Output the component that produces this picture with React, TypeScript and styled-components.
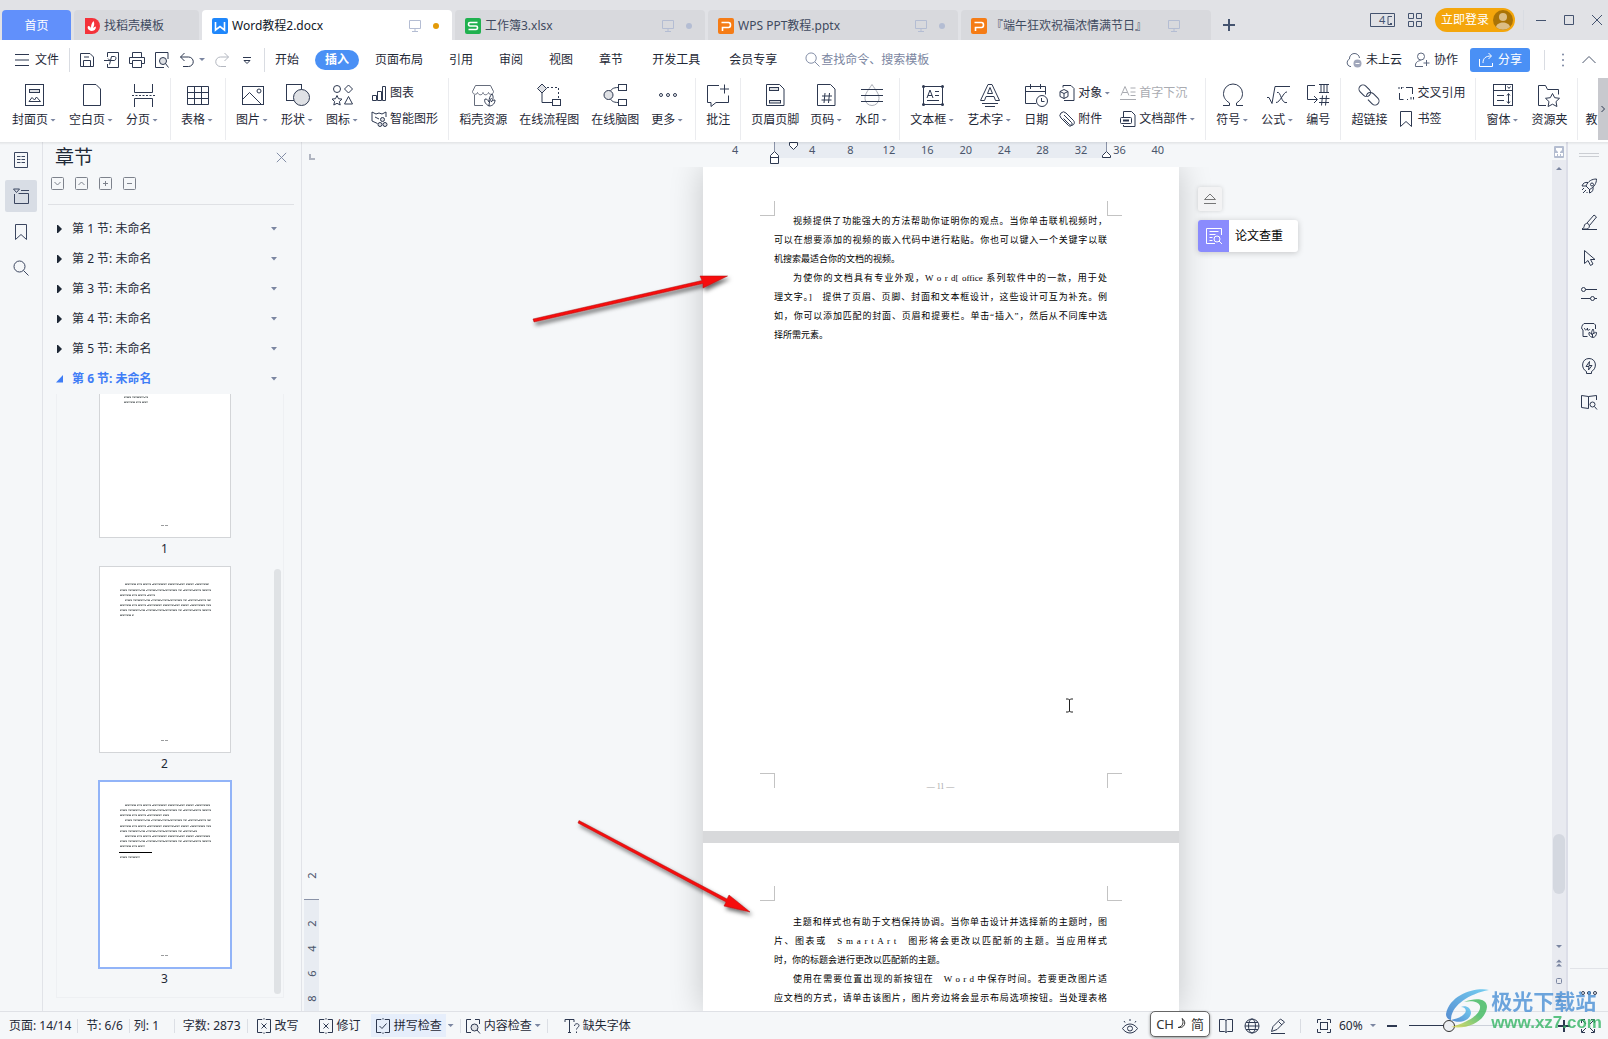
import React from "react";
import styled, { createGlobalStyle, css } from "styled-components";

const ink = "#2d3850";
const text = "#1f2937";
const mute = "#7b86a1";
const accent = "#4a90f5";
const surface = "#f5f7f9";
const soft = "#dfe1e5";

const GlobalStyle = createGlobalStyle`
  *, *::before, *::after { box-sizing: border-box; }
  html, body { margin: 0; height: 100%; }
  body {
    font: 12px/16px "Noto Sans", "Noto Sans CJK SC", sans-serif;
    color: ${text};
    background: ${surface};
    overflow: hidden;
  }
  button, input, select {
    font: inherit;
    color: inherit;
    margin: 0;
    padding: 0;
    border: 0;
    background: none;
    white-space: nowrap;
  }
`;

const Shell = styled.div`
  position: relative;
  height: 100vh;
  display: flex;
  flex-direction: column;
`;

/* ---------- icons ---------- */

const Svg = styled.svg`
  flex: none;
  display: block;
  overflow: visible;
`;

type IconProps = { name: string; size?: number; color?: string };

const leaf = (
  <>
    <path d="M18 23c-4-2-5-5-4-7 2 0 3 1 4 3 0-4 1-6 3-8 2 3 1 6-1 8 1-1 2-2 4-2 0 3-2 6-6 6z" fill="#fff" />
    <path d="M18 23c0-3 1-6 2.500-8" />
  </>
);

const glyphs: Record<string, React.ReactNode> = {
  cover: <><rect x="2.500" y="1.500" width="18" height="21" /><rect x="6.500" y="6.500" width="10" height="3" fill={soft} /><path d="M6 18.500l3-4 2.500 2.500 2-3 4 4.500z" /></>,
  blank: <path d="M3.500 1.500h12.500l4.500 4.500v16.500h-17z" />,
  break: <><path d="M3.500 1v8.500h18V1M3.500 24v-8.500h18V24" /><path d="M1 12.500h23" strokeDasharray="2 1.500" /></>,
  table: <path d="M1.500 3.500h21v18h-21zM1.500 9.500h21M1.500 15.500h21M8.500 3.500v18M15.500 3.500v18" />,
  picture: <><rect x="1.500" y="3.500" width="21" height="18" /><circle cx="18" cy="8" r="2" /><path d="M2 16l6.500-6.500L20.500 21.500" /></>,
  shapes: <><rect x=".500" y="1.500" width="15" height="16" /><circle cx="15.500" cy="14.500" r="8" fill={soft} /></>,
  icons: <><circle cx="6" cy="6" r="3.500" /><path d="M17.500 2l4 4-4 4-4-4zM17.500 13.500l4 7.500h-8zM6 12.500l1.500 3.200 3.500.400-2.600 2.400.800 3.500L6 20.300 2.800 22l.800-3.500L1 16.100l3.500-.400z" /></>,
  store: <><path d="M1.500 8.500L4.500 2.500h15l3 6c0 3-4 4-5 1-1 3-5 3-5.500 0-.500 3-4.500 3-5.500 0-1 3-5 2-5-1zM3.500 12v10.500H12" stroke="#666d7c" />{leaf}</>,
  flow: <><path d="M5 1l4.500 4.500L5 10 .500 5.500z" fill={soft} /><path d="M5 10v9.500h11" /><path d="M10 4.500h11.500V16" strokeDasharray="2 2" /><rect x="15.500" y="16.500" width="8" height="6" /></>,
  mind: <><circle cx="5.500" cy="12" r="4.500" fill={soft} /><rect x="15.500" y="1.500" width="8" height="6" /><rect x="15.500" y="16.500" width="8" height="6" /><path d="M15.500 4.500c-6 0-7 2-8 3.500M15.500 19.500c-6 0-7-2-8-3.500" /></>,
  dots: <><circle cx="5" cy="12" r="1.500" /><circle cx="12" cy="12" r="1.500" /><circle cx="19" cy="12" r="1.500" /></>,
  comment: <path d="M13 2.500H1.500v17h3.500v4l5-4h12.500v-7M18.500 1.500v9M14 6h9" />,
  header: <><path d="M3.500 1.500h13l4.500 4.500v16.500h-17.500z" /><rect x="6.500" y="4.500" width="9" height="3" fill={soft} /><rect x="6.500" y="17.500" width="11" height="2.500" fill={soft} /></>,
  pageno: <><path d="M2.500 1.500h13l4.500 4.500v16.500h-17.500z" /><path d="M10 10l-1 10M14.500 10l-1 10M7 13h10M6.500 17h10" /></>,
  watermark: <><path d="M12 1.500c4 6 7 9 7 14a7 7 0 0 1-14 0c0-5 3-8 7-14z" stroke="#a9adb6" /><path d="M1 6.500h22M1 12.500h22M1 18.500h22" /></>,
  textbox: <><rect x="2.500" y="3.500" width="19" height="18" /><path d="M6 15l3-8 3 8M7 12.500h4M14 8.500h4M14 12.500h4M6 17.500h12" /><g fill={ink} stroke="none"><circle cx="2.500" cy="3.500" r="1.500" /><circle cx="21.500" cy="3.500" r="1.500" /><circle cx="2.500" cy="21.500" r="1.500" /><circle cx="21.500" cy="21.500" r="1.500" /></g></>,
  wordart: <><path d="M2.500 17.500l7.500-16h4l7.500 16h-4l-1.500-4h-8l-1.500 4zM9.500 10.500h5l-2.500-6z" /><path d="M4 20.500h16M7 23.500h10" /></>,
  date: <><path d="M12 20.500H1.500v-17h20v8M1.500 8.500h20M6.500 1v5M16.500 1v5" /><circle cx="18" cy="18" r="5.500" fill="#fff" /><path d="M17.500 15v3.500h3" /></>,
  omega: <path d="M2 22.500h6.500v-2.500C4 17 2.500 14 2.500 10.500a9 9 0 0 1 19 0c0 3.500-1.500 6.500-6 9.500v2.500H22" />,
  formula: <path d="M1 14.500h2l3 6 3-17h15M11 9.500c4-2 4 12 10 10M21 9c-3-1-7 11-11 10.500" />,
  numbering: <><path d="M9 2.500H1.500v14H11M8 13l3.500 3.500L8 20" /><path d="M13 1.500h10M13 9.500h10M15 1.500v8M18 1.500v8M21 1.500v8M16.500 12.500l-1 10M20.500 12.500l-1 10M13.500 15.500h10M13 19.500h10" /></>,
  link: <g transform="rotate(45 12 12)"><rect x="-.500" y="8" width="13" height="8" rx="4" /><path d="M11 14.500a4 4 0 0 1 .500-5.500c1-.800 2-1 3-1h6a4 4 0 0 1 0 8h-6" /></g>,
  form: <><rect x="2.500" y="1.500" width="19" height="21" /><path d="M2.500 7.500h19M14.500 1.500v6M16.500 3.500l1.500 2 1.500-2M6 12.500h7M6 17.500h7M17.500 11v9M16 12.500l1.500-2 1.500 2M16 18.500l1.500 2 1.500-2" /></>,
  folder: <><path d="M9 22.500H1.500v-20h7l2 4h11v5" /><path d="M15.500 10.500l2.200 4.200 4.800.600-3.500 3.300.900 4.900-4.400-2.300-4.400 2.300.900-4.900-3.500-3.300 4.800-.600z" fill="#fff" /></>,

  chart: <path d="M1.500 10.500h4v5h-4zM6.500 6.500h4v9h-4zM11.500 1.500h3v14h-3z" />,
  smart: <><path d="M6.500 12.500L1 10V1l4 2 3-1 3 1 4-2v5M4 6l4 2" /><circle cx="11.500" cy="8.500" r="2" fill={soft} /><circle cx="9" cy="13.500" r="2" fill={soft} /><circle cx="14" cy="13.500" r="2" fill={soft} /></>,
  object: <><path d="M4 2.500V.500h8l3 3v12H5" /><path d="M5 4.500l4 2v5l-4 2-4-2v-5zM1 6.500l4 2 4-2M5 8.500v5" fill="#fff" /></>,
  attach: <path d="M5 4l7.500 7.500a2 2 0 0 1-3 3L2 7a3.500 3.500 0 0 1 5-5l7.500 7.500c2.500 3-1 6.500-4 4L4.500 7.500" />,
  dropcap: <path d="M1 10.500l4-9 4 9M2.500 7.500h5M10.500 3h5M10.500 7h5M10.500 10.500h5M0 14.500h16" />,
  parts: <><path d="M3.500 6V.500h8l3.500 3.500v11.500H3.500V14" /><rect x=".500" y="6.500" width="11" height="6" rx="1" fill="#fff" /><path d="M3 9.500h6" strokeWidth="2" /></>,
  crossref: <path d="M8 2.500h6.500V9M5.500 14.500H1.500V8M1 2v2M3.500 2v2M13 12v2.500M15.500 12v2.500M5 2v1M9 14.500h1" />,
  bookmark: <path d="M2.500.500h11v15L8 10.500l-5.500 5z" />,

  save: <path d="M1.500 1.500h9.500l3.500 3.500v9.500h-13zM4.500 14.500v-6h7v6M5 5h5" />,
  pdf: <path d="M3.500 5V.500h11v15h-11V12M0 8.500h6l-2-2M5.500 12.500l2-8h3c2 0 2 4-.500 4H7" />,
  print: <path d="M3.500 5V.500h9V5M3.500 11.500h-3v-6h15v6h-3M3.500 8.500h9v7h-9z" />,
  preview: <><path d="M10 15.500H1.500V.500h12.500V7" /><circle cx="9" cy="9" r="3.500" fill={soft} /><path d="M11.500 11.500l3 4" /></>,
  undo: <path d="M5.500 1L1.500 5l4 4M1.500 5h8a4.500 4.500 0 0 1 0 9.500H4" />,
  redo: <path d="M10.500 1l4 4-4 4M14.500 5h-8a4.500 4.500 0 0 0 0 9.500H12" />,
  menuMore: <path d="M4 5.500h8M5 8.500l3 3 3-3z" />,
  menu: <path d="M1 2.500h14M1 8h14M1 13.500h14" />,
  search: <><circle cx="6.500" cy="6.500" r="5.500" /><path d="M10.500 10.500l5 5" /></>,
  cloud: <><path d="M5 14.500h-1a4 4 0 0 1-.500-7.500A5 5 0 0 1 13.500 6" /><circle cx="11.500" cy="11.500" r="4" fill="#a1a7bb" stroke="none" /><path d="M9.500 11.500h4" stroke="#fff" /></>,
  people: <><circle cx="7" cy="4.500" r="3.500" /><path d="M9 14.500H1.500c-.500-4 2-5.500 5-6M12.500 8v6M9.500 11h6" /></>,
  share: <path d="M1.500 7v7.500h13V11M5 11c0-5 3-7 8-7M10.500 1l3 3-3 3" />,
  kebab: <g fill={mute} stroke="none"><circle cx="8" cy="2.500" r="1" /><circle cx="8" cy="8" r="1" /><circle cx="8" cy="13.500" r="1" /></g>,
  up: <path d="M1.500 11L8 4.500l6.500 6.500" />,
  monitor: <path d="M2.500 2.500h11v8h-11zM8 10.500v3M5 13.500h6" />,
  plus: <path d="M8 2v12M2 8h12" strokeWidth="2" />,
  minus: <path d="M3 8h10" strokeWidth="2" />,
  grid: <path d="M1.500 1.500h5v5h-5zM9.500 1.500h5v5h-5zM1.500 9.500h5v5h-5zM9.500 9.500h5v5h-5z" />,
  min: <path d="M3 8.500h10" />,
  max: <path d="M3.500 3.500h9v9h-9z" />,
  close: <path d="M3 3l10 10M13 3L3 13" />,

  boxDown: <><rect x="1.500" y="1.500" width="12" height="12" rx="1" /><path d="M4.500 6l3 3 3-3" /></>,
  boxUp: <><rect x="1.500" y="1.500" width="12" height="12" rx="1" /><path d="M4.500 9l3-3 3 3" /></>,
  boxPlus: <><rect x="1.500" y="1.500" width="12" height="12" rx="1" /><path d="M7.500 5v5M5 7.500h5" /></>,
  boxMinus: <><rect x="1.500" y="1.500" width="12" height="12" rx="1" /><path d="M5 7.500h5" /></>,

  outline: <path d="M1.500.500h13v15h-13zM4 4.500h3.500M8.500 4.500H12M4 7.500h3.500M8.500 7.500H12M4 10.500h3.500M8.500 10.500H12" />,
  chapters: <path d="M.500 1h6l-3 3.500zM8 2.500h8M1.500 6v9.500h14v-10h-10" />,
  rocket: <path d="M5 8c2-5 6-7 10.500-7 0 4-2 8-7 10.500zM5 8L1 8c1-3 3-4 6-3.500M8.500 11l0 4c3-1 4-3 3.500-6M1 12l2-2M2 15l3-3M5.500 15l1-1M9.500 6.500a1.500 1.500 0 1 0 3 0 1.500 1.500 0 1 0-3 0" />,
  brush: <path d="M6 9l7-8 2.500 2-7 8.500M1 15.500h15M1 15c2-1 2-2 2.500-4 1-2 3-2 4.500-.500 1 2 0 4-2 4.500z" />,
  pointer: <path d="M3.500.500v13l3.500-3 2.500 5 2.500-1.500-2.500-4.500h4.500z" />,
  sliders: <><circle cx="2.500" cy="3.500" r="2" /><path d="M4.500 3.500H16M0 12.500h9.500M13.500 12.500H16" /><circle cx="11.500" cy="12.500" r="2" /></>,
  shop: <><path d="M6.500 14.500H2V8C0 7 .500 5 1.500 3L3 1.500h10l1.500 1.500v4M3.500 6c0 2.500 2.500 2.500 3 0v2M6.500 8c1 .500 2 0 2.500-1" /><path d="M11.500 15.500c-3-1-4-3-3.500-5 1.500 0 2 1 2.500 2 0-3 .500-4 1.500-5.500 1 2 1 3 .500 5 .500-1 1.500-2 3-1.500 0 3-1.500 5-4 5zM11.500 15.500v-4" /></>,
  bulb: <path d="M5.500 13.500c-6-3-5-13 2.500-13s8.500 10 2.500 13v2h-5zM8.500 3.500L5 8.500h3l-.500 3.500L11 7.500H8z" />,
  reader: <><path d="M7.500 14.500L.500 13.500V1.500L7.500 2.500 15.500 1.500V6M7.500 2.500v12" /><circle cx="11.500" cy="10.500" r="2.500" /><path d="M13.500 12.500l2.500 3" /></>,
  ooo: <><circle cx="2" cy="8" r="1.500" /><circle cx="8" cy="8" r="1.500" /><circle cx="14" cy="8" r="1.500" /></>,

  boxX: <path d="M6 1.500H1.500v13H6M10 1.500h4.500v13H10M5.500 5.500l5 5M10.500 5.500l-5 5M7 1.500l1-1 1 1M7 14.500l1 1 1-1" />,
  boxCheck: <path d="M6 1.500H1.500v13H6M10 1.500h4.500v13H10M4.500 8l2.500 2.500 4.500-5M7 1.500l1-1 1 1M7 14.500l1 1 1-1" />,
  boxFind: <><path d="M6 1.500H1.500v13H6M10 1.500h4.500V6" /><circle cx="9.500" cy="9.500" r="3.500" fill={soft} /><path d="M12 12l3 3.500" /></>,
  missing: <path d="M1 4V1.500h9V4M5.500 1.500v13M4 14.500h3M10.500 8c0-3 4.500-3 4.500-.500 0 2-2.500 2-2.500 4M12.500 13.500v1.500" />,
  eye: <><path d="M.500 10.500c4-6 11-6 15 0-4 6-11 6-15 0zM3 4.500L2 3M8 3V1M13 4.500L14 3" /><circle cx="8" cy="10.500" r="2.500" /></>,
  book: <path d="M8 2.500v12M8 2.500L6.500 1.500h-5v12h5l1.500 1 1.500-1h5v-12h-5z" />,
  globe: <><circle cx="8" cy="8" r="7" /><ellipse cx="8" cy="8" rx="3.500" ry="7" /><path d="M1 8h14M2 4.500h12M2 11.500h12" /></>,
  pen: <path d="M1.500 13.500l1.500-5 7.500-7.500 4 3-7.500 7.500zM8.500 3.500l3.500 3.500M1 15.500h14" />,
  fit: <><path d="M1.500 5V1.500H5M11 1.500h3.500V5M14.500 11v3.500H11M5 14.500H1.500V11" /><rect x="4.500" y="4.500" width="7" height="7" /></>,
  expand: <path d="M1.500 5V1.500H5M11 1.500h3.500V5M14.500 11v3.500H11M5 14.500H1.500V11M2 2l4 4M14 2l-4 4M14 14l-4-4M2 14l4-4" />,
  paper: <><path d="M9 15.500H.500v-15h15V7M3.500 3.500h9M3.500 6.500h6M3.500 9.500h3M3.500 12.500h3" /><circle cx="11" cy="11" r="3" /><path d="M13 13l3 3" /></>,
  lift: <path d="M2.500 8.500L8 3l5.500 5.500zM2 12.500h12" />,
};

const big = new Set(["cover", "blank", "break", "table", "picture", "shapes", "icons", "store", "flow", "mind", "dots", "comment", "header", "pageno", "watermark", "textbox", "wordart", "date", "omega", "formula", "numbering", "link", "form", "folder"]);

function Icon({ name, size = big.has(name) ? 24 : 16, color = ink }: IconProps) {
  const box = big.has(name) ? 24 : 16;
  return (
    <Svg width={size} height={size} viewBox={`0 0 ${box} ${box}`} fill="none" stroke={color} aria-hidden="true">
      {glyphs[name]}
    </Svg>
  );
}

const Caret = styled.span<{ $up?: boolean }>`
  flex: none;
  width: 6px;
  height: 3px;
  background: ${mute};
  clip-path: ${(p) => (p.$up ? "polygon(0 100%, 100% 100%, 50% 0)" : "polygon(0 0, 100% 0, 50% 100%)")};
`;

const Rule = styled.span<{ $h?: number }>`
  flex: none;
  width: 1px;
  height: ${(p) => p.$h ?? 20}px;
  background: #d9dce2;
`;

/* ---------- title bar ---------- */

const TitleBar = styled.header`
  flex: none;
  height: 40px;
  display: flex;
  align-items: flex-end;
  padding-left: 2px;
  background: #e1e2e6;
`;

const Tabs = styled.nav`
  display: flex;
  gap: 3px;
`;

const DocTab = styled.button<{ $kind?: "home" | "active"; $w: number }>`
  width: ${(p) => p.$w}px;
  height: 30px;
  padding: 2px 10px 0;
  display: flex;
  align-items: center;
  gap: 4px;
  border-radius: 4px 4px 0 0;
  background: #d8d9dd;
  color: #3f4a60;
  ${(p) => p.$kind === "active" && css`background: #fff; color: #111827;`}
  ${(p) => p.$kind === "home" && css`background: #6190fb; color: #fff; justify-content: center;`}
`;

const TabTail = styled.span`
  margin-left: auto;
  display: flex;
  align-items: center;
  gap: 10px;
`;

const Dot = styled.span<{ $c: string }>`
  width: 6px;
  height: 6px;
  margin-right: 3px;
  border-radius: 50%;
  background: ${(p) => p.$c};
`;

const DotSlot = styled.span`
  width: 9px;
`;

const NewTab = styled.button`
  height: 30px;
  margin-left: 10px;
`;

const WindowTools = styled.div`
  margin-left: auto;
  height: 40px;
  padding: 0 3px 0 0;
  display: flex;
  align-items: center;
`;

const ToolSet = styled.div<{ $gap: number; $ml?: number }>`
  display: flex;
  align-items: center;
  gap: ${(p) => p.$gap}px;
  margin-left: ${(p) => p.$ml ?? 0}px;
`;

const Login = styled.button`
  height: 24px;
  margin: 0 8px 0 12px;
  padding: 0 2px 0 6px;
  display: flex;
  align-items: center;
  gap: 4px;
  border-radius: 12px;
  background: #f4a60c;
  color: #fff;
`;

function AppLogo({ kind }: { kind: "w" | "s" | "p" | "d" }) {
  const bg = { w: "#1f87fb", s: "#1fb14f", p: "#f57c16", d: "#f4323a" }[kind];
  return (
    <Svg width="16" height="16" viewBox="0 0 16 16" fill="none" stroke="#fff" strokeWidth="1.6" aria-hidden="true">
      {kind === "d" ? <path d="M1 0h7a8 8 0 0 1 0 16H1z" fill={bg} stroke="none" /> : <rect width="16" height="16" rx="2" fill={bg} stroke="none" />}
      {kind === "w" && <path d="M3.500 4v8L8 8.500l4.500 3.500V4" />}
      {kind === "s" && <path d="M12.500 4.500H5c-1 0-1.500.500-1.500 1.500s.500 2 1.500 2h6c1 0 1.500.500 1.500 1.500s-.500 2-1.500 2H3.500" />}
      {kind === "p" && <path d="M4.500 13V9.500h6c1.500 0 2-1 2-2.500s-.500-2.500-2-2.500h-7" />}
      {kind === "d" && <path d="M7 13c-3-1-4-3-3-5 2 0 3 1 3 3 0-3 0-5 2.500-8 1.500 3 .500 5-.500 7 1-1 2-1.500 3-1.500 0 3-2 4.500-5 4.500z" fill="#fff" stroke="none" />}
    </Svg>
  );
}

const docs = [
  { title: "Word教程2.docx", kind: "w" as const, dot: "#e39a08", active: true },
  { title: "工作簿3.xlsx", kind: "s" as const, dot: "#b4bdd3" },
  { title: "WPS PPT教程.pptx", kind: "p" as const, dot: "#b4bdd3" },
  { title: "『端午狂欢祝福浓情满节日』", kind: "p" as const },
];

function TopBar() {
  return (
    <TitleBar>
      <Tabs aria-label="文档标签">
        <DocTab $kind="home" $w={69}>首页</DocTab>
        <DocTab $w={125}><AppLogo kind="d" />找稻壳模板</DocTab>
        {docs.map((d) => (
          <DocTab key={d.title} $w={250} $kind={d.active ? "active" : undefined}>
            <AppLogo kind={d.kind} />
            {d.title}
            <TabTail>
              <Icon name="monitor" color="#b4bdd3" />
              {d.dot ? <Dot $c={d.dot} /> : <DotSlot />}
            </TabTail>
          </DocTab>
        ))}
      </Tabs>
      <NewTab aria-label="新建标签"><Icon name="plus" color="#44536f" /></NewTab>
      <WindowTools>
        <ToolSet $gap={12}>
          <button aria-label="窗口数量">
            <Svg width="25" height="16" viewBox="0 0 25 16" fill="none" stroke="#44536f">
              <path d="M.500 1.500h24v13H.500zM22 4.500h-4v8h4M20 11.500h2" />
              <text x="9" y="12" fontSize="11" fill="#44536f" stroke="none">4</text>
            </Svg>
          </button>
          <button aria-label="应用"><Icon name="grid" color="#44536f" /></button>
        </ToolSet>
        <Login>
          立即登录
          <Svg width="20" height="20" viewBox="0 0 20 20" aria-hidden="true">
            <circle cx="10" cy="10" r="10" fill="#aa7306" />
            <circle cx="10" cy="7" r="4" fill="#dcbd85" />
            <path d="M3 17c1-6 13-6 14 0a10 10 0 0 1-14 0z" fill="#dcbd85" />
          </Svg>
        </Login>
        <Rule />
        <ToolSet $gap={12} $ml={9}>
          <button aria-label="最小化"><Icon name="min" color="#44536f" /></button>
          <button aria-label="最大化"><Icon name="max" color="#44536f" /></button>
          <button aria-label="关闭"><Icon name="close" color="#44536f" /></button>
        </ToolSet>
      </WindowTools>
    </TitleBar>
  );
}

/* ---------- menu row ---------- */

const MenuRow = styled.div`
  flex: none;
  height: 35px;
  padding: 4px 11px 0 14px;
  display: flex;
  align-items: center;
  background: #fff;
`;

const TextButton = styled.button<{ $gap?: number }>`
  display: flex;
  align-items: center;
  gap: ${(p) => p.$gap ?? 4}px;
`;

const RibbonTabs = styled.nav`
  display: flex;
  gap: 6px;
`;

const RibbonTab = styled.button<{ $on?: boolean; $wide?: boolean }>`
  height: 20px;
  padding: 0 ${(p) => (p.$wide ? 13 : 10)}px;
  border-radius: 10px;
  ${(p) => p.$on && css`background: ${accent}; color: #fff; font-weight: 700;`}
`;

const SearchBox = styled.label`
  flex: 1;
  margin-left: 18px;
  display: flex;
  align-items: center;
  gap: 1px;
  input { flex: 1; min-width: 0; outline: 0; }
  input::placeholder { color: ${mute}; opacity: 1; }
`;

const Share = styled.button`
  height: 24px;
  margin: 0 14px 0 12px;
  padding: 0 8px;
  display: flex;
  align-items: center;
  gap: 4px;
  border-radius: 3px;
  background: ${accent};
  color: #fff;
`;

const ribbonTabs = ["开始", "插入", "页面布局", "引用", "审阅", "视图", "章节", "开发工具", "会员专享"];

function Menu() {
  return (
    <MenuRow>
      <TextButton $gap={5}><Icon name="menu" />文件</TextButton>
      <ToolSet $gap={9} $ml={10}>
        <Rule $h={24} />
        {[["save", "保存"], ["pdf", "输出为PDF"], ["print", "打印"], ["preview", "打印预览"]].map(([n, l]) => (
          <button key={n} aria-label={l}><Icon name={n} /></button>
        ))}
        <TextButton aria-label="撤销" $gap={4}><Icon name="undo" /><Caret /></TextButton>
        <button aria-label="恢复"><Icon name="redo" color="#b3b7c0" /></button>
        <button aria-label="自定义快速访问"><Icon name="menuMore" /></button>
        <Rule $h={24} />
      </ToolSet>
      <RibbonTabs aria-label="功能区">
        {ribbonTabs.map((t) => (
          <RibbonTab key={t} $on={t === "插入"} $wide={t === "开发工具"}>{t}</RibbonTab>
        ))}
      </RibbonTabs>
      <SearchBox>
        <Icon name="search" color={mute} size={15} />
        <input aria-label="查找" placeholder="查找命令、搜索模板" />
      </SearchBox>
      <ToolSet $gap={12}>
        <TextButton><Icon name="cloud" color="#5c677e" />未上云</TextButton>
        <TextButton><Icon name="people" color="#5c677e" />协作</TextButton>
      </ToolSet>
      <Share><Icon name="share" color="#fff" />分享</Share>
      <Rule />
      <ToolSet $gap={10} $ml={10}>
        <button aria-label="更多"><Icon name="kebab" /></button>
        <button aria-label="折叠功能区"><Icon name="up" color="#4b566c" /></button>
      </ToolSet>
    </MenuRow>
  );
}

/* ---------- ribbon ---------- */

const Ribbon = styled.div`
  flex: none;
  height: 67px;
  display: flex;
  overflow: hidden;
  background: #fff;
`;

const RibbonEdge = styled.div`
  flex: none;
  height: 3px;
  margin-bottom: -3px;
  z-index: 2;
  background: linear-gradient(rgba(0, 0, 0, 0.08), transparent);
`;

const Groups = styled.div`
  flex: 1;
  min-width: 0;
  display: flex;
  overflow: hidden;
  padding-left: 2px;
`;

const Group = styled.div<{ $gap?: number; $edge?: boolean }>`
  flex: none;
  height: 62px;
  margin-top: 3px;
  padding: 5px 10px 0 ${(p) => (p.$edge ? 7 : 10)}px;
  display: flex;
  gap: ${(p) => p.$gap ?? 11}px;
  border-right: 1px solid #ebecef;
`;

const BigTool = styled.button`
  flex: none;
  display: flex;
  flex-direction: column;
  align-items: center;
  align-self: flex-start;
  gap: 5px;
`;

const Label = styled.span<{ $caret?: boolean }>`
  display: flex;
  align-items: center;
  gap: 2px;
  padding-right: ${(p) => (p.$caret ? 2 : 0)}px;
`;

const Stack = styled.div<{ $cols: number }>`
  flex: none;
  display: grid;
  grid-template-columns: repeat(${(p) => p.$cols}, auto);
  align-content: start;
  gap: 8px 10px;
  padding-top: 1px;
`;

const SmallTool = styled.button<{ $off?: boolean }>`
  height: 18px;
  display: flex;
  align-items: center;
  gap: 3px;
  color: ${(p) => (p.$off ? "#a9abb1" : "inherit")};
`;

const ScrollHandle = styled.button`
  flex: none;
  width: 10px;
  height: 62px;
  margin-top: 3px;
  display: grid;
  place-items: center;
  background: #c8c9ce;
`;

type Tool = [icon: string, label: string, caret?: boolean, off?: boolean];
type GroupDef = { gap?: number; edge?: boolean; tools: Tool[]; cols?: number; small?: Tool[] };

const groups: GroupDef[] = [
  { tools: [["cover", "封面页", true], ["blank", "空白页", true], ["break", "分页", true]] },
  { tools: [["table", "表格", true]] },
  { tools: [["picture", "图片", true], ["shapes", "形状", true], ["icons", "图标", true]], cols: 1, small: [["chart", "图表"], ["smart", "智能图形"]] },
  { gap: 12, tools: [["store", "稻壳资源"], ["flow", "在线流程图"], ["mind", "在线脑图"], ["dots", "更多", true]] },
  { tools: [["comment", "批注"]] },
  { tools: [["header", "页眉页脚"], ["pageno", "页码", true], ["watermark", "水印", true]] },
  { tools: [["textbox", "文本框", true], ["wordart", "艺术字", true], ["date", "日期"]], cols: 2, small: [["object", "对象", true], ["dropcap", "首字下沉", false, true], ["attach", "附件"], ["parts", "文档部件", true]] },
  { tools: [["omega", "符号", true], ["formula", "公式", true], ["numbering", "编号"]] },
  { tools: [["link", "超链接"]], cols: 1, small: [["crossref", "交叉引用"], ["bookmark", "书签"]] },
  { tools: [["form", "窗体", true], ["folder", "资源夹"]] },
  { edge: true, tools: [["", "教"]] },
];

const PlainTool = styled(BigTool)`
  padding-top: 29px;
`;

function RibbonBar() {
  return (
    <>
      <Ribbon>
        <Groups>
          {groups.map((g) => (
            <Group key={g.tools[0][1]} $gap={g.gap} $edge={g.edge}>
              {g.tools.map(([icon, label, caret]) =>
                icon === "" ? (
                  <PlainTool key={label}>{label}</PlainTool>
                ) : (
                  <BigTool key={label}>
                    <Icon name={icon} />
                    <Label $caret={caret}>{label}{caret && <Caret />}</Label>
                  </BigTool>
                ),
              )}
              {g.small && (
                <Stack $cols={g.cols ?? 1}>
                  {g.small.map(([icon, label, caret, off]) => (
                    <SmallTool key={label} $off={off} disabled={off}>
                      <Icon name={icon} color={off ? "#a9abb1" : ink} />
                      <Label>{label}{caret && <Caret />}</Label>
                    </SmallTool>
                  ))}
                </Stack>
              )}
            </Group>
          ))}
        </Groups>
        <ScrollHandle aria-label="向右滚动">
          <Svg width="6" height="8" viewBox="0 0 6 8" fill="none" stroke={ink}><path d="M1.500 1l3 3-3 3" /></Svg>
        </ScrollHandle>
      </Ribbon>
      <RibbonEdge />
    </>
  );
}

/* ---------- left rail and chapter panel ---------- */

const Work = styled.main`
  flex: 1;
  min-height: 0;
  display: flex;
`;

const Rail = styled.nav`
  flex: none;
  width: 43px;
  padding: 2px 5px 0;
  display: flex;
  flex-direction: column;
  gap: 4px;
  border-right: 1px solid #e1e3e8;
`;

const RailButton = styled.button<{ $on?: boolean }>`
  height: 32px;
  display: grid;
  place-items: center;
  border-radius: 2px;
  background: ${(p) => (p.$on ? "#d8dde5" : "none")};
`;

const Panel = styled.aside`
  flex: none;
  width: 259px;
  display: flex;
  flex-direction: column;
  border-right: 1px solid #e1e3e8;
`;

const PanelHead = styled.div`
  height: 30px;
  padding: 0 12px 0 12px;
  display: flex;
  align-items: center;
  justify-content: space-between;
  h2 { margin: 0; font-size: 19px; line-height: 30px; font-weight: 400; }
`;

const PanelTools = styled.div`
  padding: 4px 7px 13px;
  display: flex;
  gap: 9px;
`;

const Divider = styled.hr`
  width: 246px;
  height: 1px;
  margin: 0 0 8px 5px;
  border: 0;
  background: #dfe1e5;
`;

const Chapters = styled.ul`
  margin: 0;
  padding: 0 24px 0 14px;
  list-style: none;
`;

const Chapter = styled.li<{ $open?: boolean }>`
  height: 30px;
  padding-top: 1px;
  display: flex;
  align-items: center;
  justify-content: space-between;
  ${(p) => p.$open && css`color: #3f7df6; font-weight: 700;`}
`;

const ChapterName = styled.button`
  display: flex;
  align-items: center;
  gap: 8px;
`;

const ThumbArea = styled.div`
  flex: 1;
  min-height: 0;
  margin: 1px 17px 13px 13px;
  display: flex;
  border: 1px solid #eef0f3;
  border-top: 0;
`;

const ThumbList = styled.div`
  flex: 1;
  display: flex;
  flex-direction: column;
  justify-content: flex-end;
  align-items: center;
  gap: 10px;
  padding: 0 2px 11px 0;
  overflow: hidden;
`;

const ThumbItem = styled.figure`
  flex: none;
  margin: 0;
  figcaption { height: 18px; line-height: 22px; text-align: center; }
`;

const Thumb = styled.button<{ $on?: boolean }>`
  display: block;
  width: 132px;
  height: 187px;
  background: #fff;
  border: 1px solid ${(p) => (p.$on ? "#92b4f8" : "#d3d5d8")};
  box-shadow: ${(p) => (p.$on ? "0 0 0 1px #92b4f8" : "none")};
`;

const ThumbBar = styled.div`
  flex: none;
  width: 7px;
  margin: 175px 2px 3px 0;
  border-radius: 4px;
  background: #dfe2e5;
`;

type Row = [x1: number, x2: number, y: number];
const thumbs: { rows: Row[]; note?: boolean }[] = [
  { rows: [[24, 48, 41], [24, 48, 45], [24, 48, 50]] },
  { rows: [[25, 109, 17], [20, 111, 23], [20, 55, 28], [25, 111, 33], [20, 111, 38], [20, 111, 43], [20, 34, 48]] },
  { rows: [[25, 111, 23], [20, 111, 28], [20, 69, 33], [25, 111, 38], [20, 111, 44], [20, 97, 49], [25, 110, 54], [20, 111, 59], [20, 45, 64], [20, 40, 75]], note: true },
];

function ThumbDrawing({ rows, note }: { rows: Row[]; note?: boolean }) {
  return (
    <Svg width="130" height="185" viewBox="0 0 130 185" fill="none" aria-hidden="true">
      {rows.map(([a, b, y], i) => (
        <g key={i}>
          <path d={`M${a} ${y}H${b}`} stroke="#c4c7c6" strokeWidth="2" strokeDasharray={i % 2 ? "7 1 12 1 4 2 9 1" : "11 1 5 1 8 2 14 1"} />
          <path d={`M${a} ${y + 0.5}H${b}`} stroke="#7d8084" strokeWidth="1" strokeDasharray={i % 2 ? "1 2 2 1 1 3" : "2 1 1 3 1 1"} />
        </g>
      ))}
      {note && <path d="M19 70.500h33" stroke="#000" />}
      <path d="M61 173.500h8" stroke="#9a9c9e" strokeDasharray="3 1" />
    </Svg>
  );
}

function LeftSide() {
  return (
    <>
      <Rail aria-label="导航">
        {[["outline", "目录"], ["chapters", "章节"], ["bookmark", "书签"], ["search", "查找"]].map(([n, l]) => (
          <RailButton key={n} aria-label={l} $on={n === "chapters"}><Icon name={n} color="#3b4660" /></RailButton>
        ))}
      </Rail>
      <Panel>
        <PanelHead>
          <h2>章节</h2>
          <button aria-label="关闭面板"><Icon name="close" color={mute} size={15} /></button>
        </PanelHead>
        <PanelTools>
          {[["boxDown", "展开"], ["boxUp", "收起"], ["boxPlus", "新增节"], ["boxMinus", "删除节"]].map(([n, l]) => (
            <button key={n} aria-label={l}><Svg width="15" height="15" viewBox="0 0 15 15" fill="none" stroke="#7d828c">{glyphs[n]}</Svg></button>
          ))}
        </PanelTools>
        <Divider />
        <Chapters>
          {[1, 2, 3, 4, 5, 6].map((n) => (
            <Chapter key={n} $open={n === 6}>
              <ChapterName>
                <Svg width="7" height="8" viewBox="0 0 7 8" aria-hidden="true">
                  {n === 6 ? <path d="M6 0v7.500H-1z" fill="#3f7df6" /> : <path d="M0 0h1l4 4-4 4H0z" fill={text} />}
                </Svg>
                第 {n} 节: 未命名
              </ChapterName>
              <button aria-label={`第 ${n} 节选项`}><Svg width="6" height="4" viewBox="0 0 6 4"><path d="M0 0h6L3 3.500z" fill={mute} /></Svg></button>
            </Chapter>
          ))}
        </Chapters>
        <ThumbArea>
          <ThumbList>
            {thumbs.map((t, i) => (
              <ThumbItem key={i}>
                <Thumb $on={i === 2} aria-label={`第 ${i + 1} 页`}><ThumbDrawing {...t} /></Thumb>
                <figcaption>{i + 1}</figcaption>
              </ThumbItem>
            ))}
          </ThumbList>
          <ThumbBar />
        </ThumbArea>
      </Panel>
    </>
  );
}

/* ---------- editor ---------- */

const Editor = styled.section`
  flex: 1;
  min-width: 0;
  display: flex;
  flex-direction: column;
`;

const RulerRow = styled.div`
  flex: none;
  height: 25px;
  display: flex;
`;

const TabMark = styled.div`
  flex: none;
  width: 18px;
  padding: 12px 0 0 7px;
`;

const Center = styled.div`
  flex: 1;
  min-width: 0;
  display: flex;
  justify-content: center;
  padding-left: 10px;
`;

const HRuler = styled.div`
  position: relative;
  width: 476px;
  height: 25px;
  padding: 0 2px 0 13px;
  display: flex;
  color: #4b566c;
  font-size: 11px;
  background: linear-gradient(#e8ecf2, #e8ecf2) 71px 0 / 332px 16px no-repeat;
  span { flex: 1; text-align: center; }
`;

const Markers = styled.svg`
  position: absolute;
  left: 0;
  top: 0;
`;

const Body = styled.div`
  flex: 1;
  min-height: 0;
  display: flex;
`;

const VRuler = styled.div`
  flex: none;
  width: 18px;
  padding: 0 1px 0 2px;
  display: flex;
  flex-direction: column;
  justify-content: flex-end;
  color: #4b566c;
  font-size: 11px;
`;

const VNum = styled.span`
  height: 25px;
  display: grid;
  place-items: center;
  transform: rotate(-90deg);
`;

const VBand = styled.div`
  height: 112px;
  margin-top: 11px;
  padding-top: 11px;
  border-top: 1px solid #8a93a8;
  background: #e8ecf2;
  overflow: hidden;
`;

const Canvas = styled(Center)`
  overflow: hidden;
`;

const Pages = styled.div`
  position: relative;
  width: 476px;
  display: flex;
  flex-direction: column;
  gap: 12px;
  background: #d8d9db;
  box-shadow: 0 0 32px rgba(0, 0, 0, 0.2);
`;

const Page = styled.article<{ $grow?: boolean; $top: number }>`
  position: relative;
  flex: ${(p) => (p.$grow ? "1 1 0" : "none")};
  min-height: ${(p) => (p.$grow ? 0 : 664)}px;
  padding: ${(p) => p.$top}px 72px 0 71px;
  display: flex;
  flex-direction: column;
  overflow: hidden;
  background: #fff;
`;

const Corner = styled.i<{ $left?: boolean; $bottom?: boolean; $y: number }>`
  position: absolute;
  width: 15px;
  height: 15px;
  top: ${(p) => p.$y}px;
  ${(p) => (p.$left ? "left: 57px; border-right" : "right: 57px; border-left")}: 1px solid #c3c3c3;
  ${(p) => (p.$bottom ? "border-top" : "border-bottom")}: 1px solid #c3c3c3;
`;

const Paragraph = styled.p`
  margin: 0;
  color: #000;
  font: 400 9px/19px "Liberation Serif", "Noto Sans CJK SC", serif;
`;

const Line = styled.span<{ $first?: boolean; $last?: boolean }>`
  display: block;
  white-space: nowrap;
  padding-left: ${(p) => (p.$first ? 19 : 0)}px;
  text-align: justify;
  text-align-last: ${(p) => (p.$last ? "left" : "justify")};
`;

const PageNumber = styled.footer`
  margin: auto 0 38px;
  text-align: center;
  font: 8px/12px "Liberation Serif", serif;
  color: #a8a8a8;
`;

const Annotations = styled.svg`
  position: absolute;
  left: 0;
  top: 0;
  overflow: visible;
  pointer-events: none;
`;

const SideTools = styled.div`
  position: absolute;
  left: calc(100% + 19px);
  top: 20px;
  display: flex;
  flex-direction: column;
  align-items: flex-start;
  gap: 9px;
`;

const LiftButton = styled.button`
  width: 24px;
  height: 24px;
  display: grid;
  place-items: center;
  border-radius: 2px;
  background: #f3f3f4;
  box-shadow: 0 0 4px rgba(0, 0, 0, 0.15);
`;

const PaperCheck = styled.button`
  width: 100px;
  height: 32px;
  display: flex;
  align-items: center;
  gap: 6px;
  border-radius: 3px;
  overflow: hidden;
  background: #fff;
  box-shadow: 0 1px 6px rgba(0, 0, 0, 0.2);
  color: #000;
`;

const PaperIcon = styled.span`
  width: 31px;
  height: 32px;
  display: grid;
  place-items: center;
  background: #8a8bfd;
`;

const firstPage = [
  ["视频提供了功能强大的方法帮助你证明你的观点。当你单击联机视频时，", "可以在想要添加的视频的嵌入代码中进行粘贴。你也可以键入一个关键字以联", "机搜索最适合你的文档的视频。"],
  ["为使你的文档具有专业外观，W o r d[ office 系列软件中的一款，用于处", "理文字。]　提供了页眉、页脚、封面和文本框设计，这些设计可互为补充。例", "如，你可以添加匹配的封面、页眉和提要栏。单击“插入”，然后从不同库中选", "择所需元素。"],
];
const secondPage = [
  ["主题和样式也有助于文档保持协调。当你单击设计并选择新的主题时，图", "片、图表或　S m a r t A r t　图形将会更改以匹配新的主题。当应用样式", "时，你的标题会进行更改以匹配新的主题。"],
  ["使用在需要位置出现的新按钮在　W o r d 中保存时间。若要更改图片适", "应文档的方式，请单击该图片，图片旁边将会显示布局选项按钮。当处理表格"],
];

function Copy({ paragraphs, open }: { paragraphs: string[][]; open?: boolean }) {
  return (
    <>
      {paragraphs.map((lines, p) => (
        <Paragraph key={p} lang="zh-CN">
          {lines.map((line, i) => {
            const ends = i === lines.length - 1 && !(open && p === paragraphs.length - 1);
            return <Line key={i} $first={i === 0} $last={ends}>{line}</Line>;
          })}
        </Paragraph>
      ))}
    </>
  );
}

const ScrollColumn = styled.div`
  flex: none;
  width: 16px;
  display: flex;
  flex-direction: column;
  align-items: center;
  border-right: 2px solid #dcdee8;
`;

const ScrollTop = styled.div`
  height: 18px;
  padding-top: 4px;
`;

const ScrollTrack = styled.div`
  flex: 1;
  align-self: stretch;
  padding: 7px 0 8px;
  display: flex;
  flex-direction: column;
  align-items: center;
  background: #e8eaf0;
`;

const ScrollThumb = styled.div`
  width: 12px;
  height: 60px;
  margin: auto 0 51px;
  border-radius: 6px;
  background: #d4d8e0;
`;

const ScrollStops = styled.div`
  display: flex;
  flex-direction: column;
  align-items: center;
  gap: 11px;
`;

const RightRail = styled.nav`
  flex: none;
  width: 40px;
  padding-top: 11px;
  display: flex;
  flex-direction: column;
  align-items: center;
`;

const Grip = styled.span`
  width: 20px;
  height: 4px;
  margin: 0 0 21px 2px;
  border: solid #cbced3;
  border-width: 1px 0;
`;

const RightButtons = styled.div`
  display: flex;
  flex-direction: column;
  gap: 20px;
  padding-left: 2px;
`;

const RightFoot = styled.div`
  align-self: stretch;
  height: 43px;
  margin: auto 0 0 2px;
  padding: 16px 0 0 11px;
  border-top: 1px solid #e1e3e8;
`;

function EditorArea() {
  return (
    <Editor>
      <RulerRow>
        <TabMark><Svg width="6" height="6" viewBox="0 0 6 6"><path d="M0 0h2v4h4v2H0z" fill="#b0b5c1" /></Svg></TabMark>
        <Center>
          <HRuler>
            {["4", "", "4", "8", "12", "16", "20", "24", "28", "32", "36", "40"].map((n, i) => <span key={i}>{n}</span>)}
            <Markers width="476" height="25" viewBox="0 0 476 25" fill="#fff" stroke={ink} aria-hidden="true">
              <path d="M71.500 0v9M403.500 0v9" stroke="#8a93a8" />
              <path d="M86.500.500h8v3l-4 4-4-4zM67.500 21.500v-8l4-4 4 4v8zM67.500 15.500h8M399.500 15.500v-2l4-4 4 4v2z" />
            </Markers>
          </HRuler>
        </Center>
      </RulerRow>
      <Body>
        <VRuler>
          <VNum>2</VNum>
          <VBand>{[2, 4, 6, 8].map((n) => <VNum key={n}>{n}</VNum>)}</VBand>
        </VRuler>
        <Canvas>
          <Pages>
            <Page $top={45}>
              <Corner $left $y={34} /><Corner $y={34} />
              <Corner $left $bottom $y={606} /><Corner $bottom $y={606} />
              <Copy paragraphs={firstPage} />
              <PageNumber>— 11 —</PageNumber>
            </Page>
            <Page $grow $top={70}>
              <Corner $left $y={43} /><Corner $y={43} />
              <Copy paragraphs={secondPage} open />
            </Page>
            <Annotations width="476" height="844" viewBox="0 0 476 844" aria-hidden="true">
              <defs>
                <filter id="arrow-shadow" x="-20%" y="-20%" width="140%" height="150%">
                  <feDropShadow dx="2" dy="3" stdDeviation="2" floodOpacity="0.6" />
                </filter>
              </defs>
              <g filter="url(#arrow-shadow)" fill="#f60808" stroke="#a81414" strokeWidth=".500">
                <path d="M-170 152L-1 113.500l-2-4.500h27.500L0 121l0-4.500L-169 155z" />
                <path d="M-124 653.500L24 732l2-4 21 17-26-6 2-4L-125 656z" />
              </g>
              <path d="M363 532h2.500l1 1 1-1H370M363 545h2.500l1-1 1 1H370M366.500 533v11" fill="none" stroke="#222" />
            </Annotations>
            <SideTools>
              <LiftButton aria-label="回到顶部"><Icon name="lift" color="#777" /></LiftButton>
              <PaperCheck><PaperIcon><Icon name="paper" color="#fff" /></PaperIcon>论文查重</PaperCheck>
            </SideTools>
          </Pages>
        </Canvas>
      </Body>
    </Editor>
  );
}

function RightSide() {
  return (
    <>
      <ScrollColumn>
        <ScrollTop>
          <Svg width="10" height="12" viewBox="0 0 10 12" aria-hidden="true">
            <rect width="10" height="12" rx="1" fill="#b4bdd0" />
            <path d="M2 2h6v2L6 6v1h3v3H1V7h3V6L2 4z" fill="#fff" />
            <path d="M3.500 8v2M6.500 8v2" stroke="#b4bdd0" />
          </Svg>
        </ScrollTop>
        <ScrollTrack>
          <Caret $up />
          <ScrollThumb />
          <ScrollStops>
            <Caret />
            <Svg width="6" height="8" viewBox="0 0 6 8" fill={mute}><path d="M0 3.500L3 .500l3 3zM0 7.500l3-3 3 3z" /></Svg>
            <Svg width="6" height="6" viewBox="0 0 6 6" fill="none" stroke={mute}><rect x=".500" y=".500" width="5" height="5" rx="1" /></Svg>
            <Svg width="6" height="8" viewBox="0 0 6 8" fill={mute}><path d="M0 .500L3 3.500l3-3zM0 4.500l3 3 3-3z" /></Svg>
          </ScrollStops>
        </ScrollTrack>
      </ScrollColumn>
      <RightRail aria-label="侧边工具">
        <Grip />
        <RightButtons>
          {[["rocket", "快捷"], ["brush", "样式"], ["pointer", "选择"], ["sliders", "属性"], ["shop", "稻壳"], ["bulb", "帮助"], ["reader", "查阅"]].map(([n, l]) => (
            <button key={n} aria-label={l}><Icon name={n} /></button>
          ))}
        </RightButtons>
        <RightFoot><button aria-label="更多工具"><Icon name="ooo" /></button></RightFoot>
      </RightRail>
    </>
  );
}

/* ---------- status bar ---------- */

const Status = styled.footer`
  flex: none;
  height: 28px;
  padding: 0 12px 0 9px;
  display: flex;
  align-items: center;
  border-top: 1px solid #dfe1e6;
`;

const Sep = styled.span<{ $tight?: boolean }>`
  flex: none;
  width: 1px;
  height: 14px;
  margin: 0 ${(p) => (p.$tight ? 4 : 8)}px 0 6px;
  background: #dcdfe5;
`;

const Info = styled.span<{ $min?: number }>`
  flex: none;
  min-width: ${(p) => p.$min ?? 0}px;
  white-space: nowrap;
`;

const Toggle = styled.button<{ $lit?: boolean; $mr?: number }>`
  flex: none;
  height: 23px;
  margin-right: ${(p) => p.$mr ?? 4}px;
  padding: 0 ${(p) => (p.$lit ? 4 : 0)}px;
  display: flex;
  align-items: center;
  gap: 3px;
  background: ${(p) => (p.$lit ? "#e6eefb" : "none")};
`;

const StatusRight = styled.div`
  margin-left: auto;
  display: flex;
  align-items: center;
`;

const Ime = styled.div`
  height: 26px;
  margin: -4px 8px 0 12px;
  padding: 0 5px;
  display: flex;
  align-items: center;
  gap: 3px;
  border: 1px solid #666;
  border-radius: 5px;
  background: #fff;
  box-shadow: 0 1px 3px rgba(0, 0, 0, 0.4);
  font-size: 13px;
  color: #333;
`;

const ZoomSelect = styled.select`
  appearance: none;
  width: 27px;
  margin: 0 4px 0 7px;
  outline: 0;
`;

const ZoomSlider = styled.input<{ $fill: number }>`
  appearance: none;
  width: 138px;
  height: 12px;
  margin: 0 9px;
  background: linear-gradient(90deg, ${ink} ${(p) => p.$fill}%, #ccd1da ${(p) => p.$fill}%) center / 100% 1px no-repeat;
  &::-webkit-slider-thumb {
    appearance: none;
    width: 12px;
    height: 12px;
    border: 1px solid #333;
    border-radius: 50%;
    background: #eceef2;
  }
`;

function StatusBar() {
  const [zoom, setZoom] = React.useState(27);
  return (
    <Status>
      <Info>页面: 14/14</Info><Sep />
      <Info>节: 6/6</Info><Sep $tight />
      <Info $min={34}>列: 1</Info><Sep />
      <Info>字数: 2873</Info><Sep />
      <Toggle $mr={19}><Icon name="boxX" />改写</Toggle>
      <Toggle $mr={10}><Icon name="boxX" />修订</Toggle>
      <Toggle $lit $mr={2}><Icon name="boxCheck" />拼写检查</Toggle>
      <Caret /><Sep $tight />
      <Toggle $mr={3}><Icon name="boxFind" />内容检查</Toggle>
      <Caret /><Sep />
      <ToolSet $gap={0} $ml={8}><Toggle><Icon name="missing" />缺失字体</Toggle></ToolSet>
      <StatusRight>
        <button aria-label="护眼模式"><Icon name="eye" /></button>
        <Ime>
          CH
          <Svg width="11" height="12" viewBox="0 0 11 12" fill="none" stroke="#333" aria-hidden="true"><path d="M5 .500c5 3 3 10-4 9 5-1 6-5 4-9z" /></Svg>
          简
        </Ime>
        <ToolSet $gap={10}>
          <button aria-label="阅读版式"><Icon name="book" /></button>
          <button aria-label="Web版式"><Icon name="globe" /></button>
          <button aria-label="写作模式"><Icon name="pen" /></button>
        </ToolSet>
        <ToolSet $gap={15} $ml={14}>
          <Rule $h={14} />
          <button aria-label="适合页面"><Icon name="fit" /></button>
        </ToolSet>
        <ZoomSelect aria-label="缩放比例" defaultValue="60%">
          <option>60%</option><option>100%</option>
        </ZoomSelect>
        <Caret />
        <ToolSet $gap={0} $ml={8}>
          <button aria-label="缩小"><Icon name="minus" /></button>
          <ZoomSlider type="range" aria-label="缩放" min={0} max={100} value={zoom} $fill={zoom} onChange={(e) => setZoom(Number(e.target.value))} />
          <button aria-label="放大"><Icon name="plus" /></button>
        </ToolSet>
        <ToolSet $gap={0} $ml={8}><button aria-label="全屏"><Icon name="expand" /></button></ToolSet>
      </StatusRight>
    </Status>
  );
}

/* ---------- site mark over the corner ---------- */

const SiteMark = styled.div`
  position: absolute;
  right: 6px;
  bottom: 5px;
  display: flex;
  align-items: flex-start;
  gap: 1px;
  pointer-events: none;
  opacity: 0.8;
`;

const SiteText = styled.div`
  display: flex;
  flex-direction: column;
  color: #4a90d6;
  font: 700 21px/24px "Noto Sans CJK SC", sans-serif;
  span { color: #35b565; font: 700 17px/22px "Liberation Sans", sans-serif; }
`;

function Site() {
  return (
    <SiteMark>
      <Svg width="44" height="42" viewBox="0 0 44 42" aria-hidden="true">
        <defs>
          <linearGradient id="sky" x1="0" y1="1" x2="1" y2="0"><stop offset="0" stopColor="#2f74c8" /><stop offset="1" stopColor="#55c4ef" /></linearGradient>
          <linearGradient id="grass" x1="0" y1="1" x2="1" y2="0"><stop offset="0" stopColor="#e6d94a" /><stop offset=".6" stopColor="#3cb85c" /></linearGradient>
        </defs>
        <path d="M43 2C30-1 4 6 0 26c0 4 3 6 5 6C5 18 22 6 43 2z" fill="url(#sky)" />
        <path d="M5 32c8 4 19 1 20-7 0-5-5-8-10-6 4 0 6 3 4 6-3 4-9 6-14 7z" fill="url(#sky)" />
        <path d="M18 14c8-2 15 0 16 4 1 7-8 15-29 21 20 3 35-8 36-20 0-8-10-10-23-5z" fill="url(#grass)" />
      </Svg>
      <SiteText>极光下载站<span>www.xz7.com</span></SiteText>
    </SiteMark>
  );
}

export default function App() {
  return (
    <>
      <GlobalStyle />
      <Shell>
        <TopBar />
        <Menu />
        <RibbonBar />
        <Work>
          <LeftSide />
          <EditorArea />
          <RightSide />
        </Work>
        <StatusBar />
        <Site />
      </Shell>
    </>
  );
}
